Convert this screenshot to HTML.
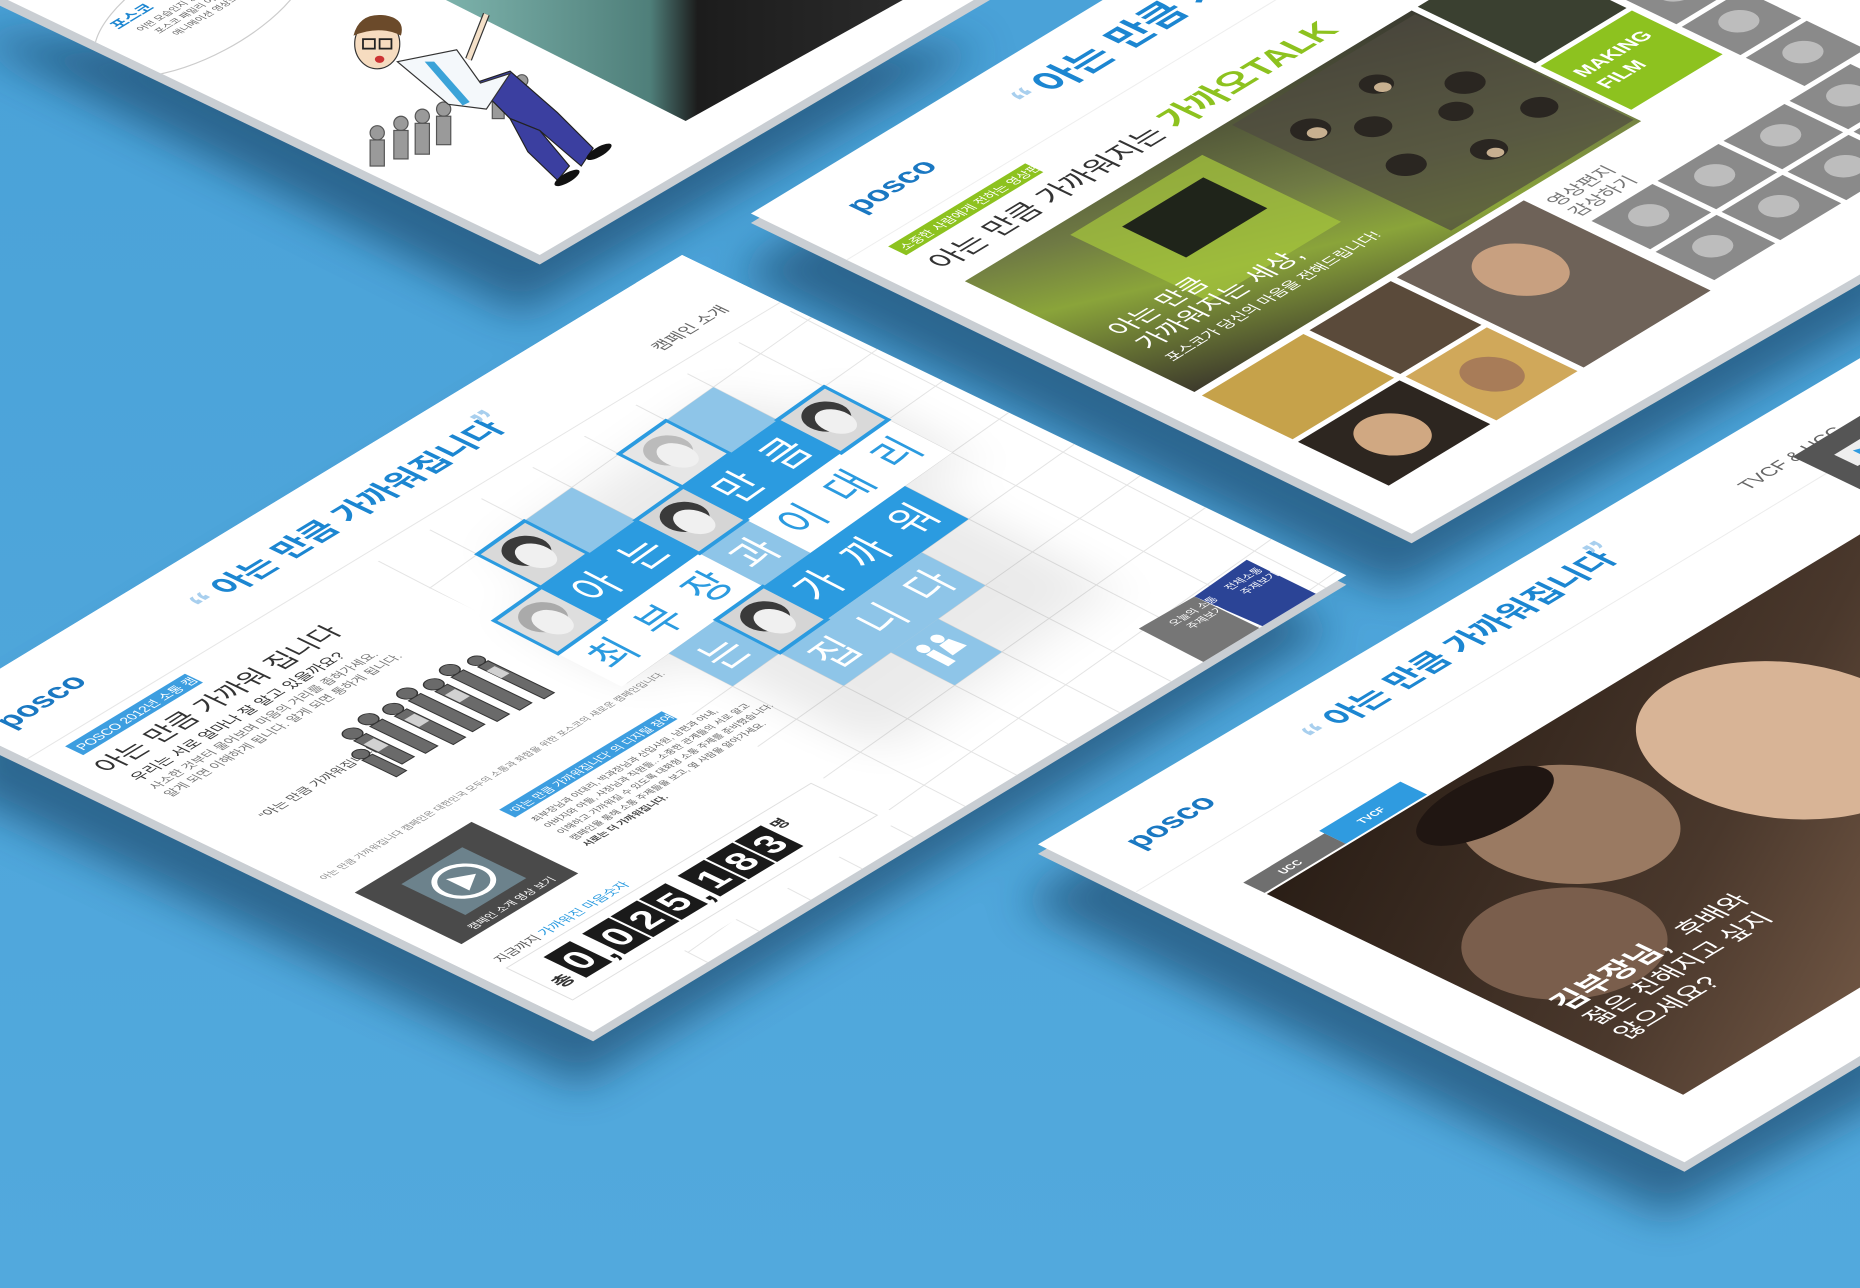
<!DOCTYPE html>
<html><head><meta charset="utf-8">
<style>
html,body{margin:0;padding:0;background:#4ea6da;}
svg{display:block}
text{font-family:"Liberation Sans","Noto Sans CJK KR",sans-serif;}
</style></head>
<body>
<svg width="1860" height="1288" viewBox="0 0 1568 1086" preserveAspectRatio="none" xmlns="http://www.w3.org/2000/svg">
<defs>
  <filter id="bl" x="-20%" y="-20%" width="140%" height="140%"><feGaussianBlur stdDeviation="18"/></filter>
  <filter id="bl2" x="-20%" y="-20%" width="140%" height="140%"><feGaussianBlur stdDeviation="4"/></filter>
  <linearGradient id="bg" x1="0" y1="0" x2="0" y2="1">
    <stop offset="0" stop-color="#4aa2d8"/><stop offset="1" stop-color="#52a9dd"/>
  </linearGradient>
  <linearGradient id="photoA" x1="0" y1="0" x2="1" y2="0">
    <stop offset="0" stop-color="#7fb5ae"/><stop offset="0.45" stop-color="#4f7f7a"/><stop offset="0.55" stop-color="#1c1c1c"/><stop offset="1" stop-color="#2b2b2b"/>
  </linearGradient>
  <linearGradient id="booth" x1="0" y1="1" x2="1" y2="0">
    <stop offset="0" stop-color="#3d3a2c"/><stop offset="0.35" stop-color="#8aa43a"/><stop offset="0.55" stop-color="#6f7a44"/><stop offset="1" stop-color="#3a3a30"/>
  </linearGradient>
  <linearGradient id="vid" x1="0" y1="0" x2="1" y2="1">
    <stop offset="0" stop-color="#2a1e16"/><stop offset="0.4" stop-color="#4a382c"/><stop offset="0.7" stop-color="#7a5e4a"/><stop offset="1" stop-color="#3a2a20"/>
  </linearGradient>
  <clipPath id="clipC"><polygon points="-20,576 575,215 1135,485 500,870 -20,619"/></clipPath>
  <clipPath id="clipB"><polygon points="633,180 951,-13 1600,-13 1600,213 1190,450"/></clipPath>
  <clipPath id="clipD"><polygon points="875,712 1600,283 1600,871 1420,980"/></clipPath>
  <clipPath id="clipA"><polygon points="-10,-8 455,215 843,-13"/></clipPath>
</defs>
<rect x="0" y="0" width="1568" height="1086" fill="url(#bg)"/>

<g filter="url(#bl)" fill="#153c5e" opacity="0.6">
  <polygon points="-30,30 440,265 830,40"/>
  <polygon points="620,230 951,40 1600,40 1600,260 1175,500"/>
  <polygon points="-30,620 565,260 1125,530 490,915 -30,670"/>
  <polygon points="860,760 1600,330 1600,920 1405,1025"/>
</g>

<g fill="#c9ced3">
  <polygon points="-10,0 455,223 843,-5"/>
  <polygon points="633,188 951,-5 1600,-5 1600,221 1190,458"/>
  <polygon points="-20,584 575,223 1135,493 500,878 -20,627"/>
  <polygon points="875,720 1600,291 1600,879 1420,988"/>
</g>

<!-- PANEL A -->
<polygon points="-10,-8 455,215 843,-13" fill="#fff"/>
<g clip-path="url(#clipA)">
  <polygon points="366,-5 770,-5 578,102" fill="url(#photoA)"/>
  <ellipse cx="170" cy="5" rx="100" ry="42" transform="rotate(-28 170 5)" fill="#fff" stroke="#ccc" stroke-width="1"/>
  <g transform="matrix(0.856,-0.519,0.900,0.434,100,25)">
    <text x="0" y="0" font-size="13" font-weight="bold" fill="#1c86d1">포스코</text>
    <text x="8" y="14" font-size="8" fill="#666">어떤 모습인지 궁금하신가요?</text>
    <text x="14" y="25" font-size="8" fill="#666">포스코 패밀리 여러분의 모습</text>
    <text x="20" y="36" font-size="8" fill="#666">애니메이션 영상으로 만나보세요</text>
  </g>
  <g fill="#9a9a9a" stroke="#555" stroke-width="1">
    <circle cx="318" cy="112" r="6"/><rect x="312" y="118" width="12" height="22"/>
    <circle cx="338" cy="104" r="6"/><rect x="332" y="110" width="12" height="24"/>
    <circle cx="356" cy="98" r="6"/><rect x="350" y="104" width="12" height="26"/>
    <circle cx="374" cy="92" r="6"/><rect x="368" y="98" width="12" height="24"/>
    <circle cx="420" cy="75" r="5"/><rect x="415" y="80" width="10" height="20"/>
    <circle cx="440" cy="68" r="5"/><rect x="435" y="73" width="10" height="20"/>
  </g>
  <g>
    <polygon points="400,70 430,60 470,95 500,125 490,140 455,110 430,100" fill="#3b3fa0" stroke="#222" stroke-width="1"/>
    <polygon points="430,100 455,110 480,140 470,152 445,128" fill="#3b3fa0" stroke="#222" stroke-width="1"/>
    <ellipse cx="505" cy="128" rx="12" ry="4" fill="#111" transform="rotate(-30 505 128)"/>
    <ellipse cx="478" cy="150" rx="12" ry="4" fill="#111" transform="rotate(-30 478 150)"/>
    <polygon points="335,52 385,42 405,70 430,62 410,92 378,88" fill="#f4f8fb" stroke="#333" stroke-width="1"/>
    <polygon points="358,52 366,52 396,86 390,89" fill="#3ba3d8"/>
    <line x1="395" y1="50" x2="410" y2="12" stroke="#333" stroke-width="6"/>
    <line x1="395" y1="50" x2="410" y2="12" stroke="#f4e0c8" stroke-width="4"/>
    <ellipse cx="318" cy="37" rx="19" ry="21" fill="#f6dcc0" stroke="#333" stroke-width="1"/>
    <path d="M298,30 Q303,10 325,13 Q342,16 338,30 Q320,21 298,30Z" fill="#6b4a2a"/>
    <rect x="306" y="33" width="10" height="8" fill="none" stroke="#222" stroke-width="1.5"/>
    <rect x="320" y="33" width="10" height="8" fill="none" stroke="#222" stroke-width="1.5"/>
    <ellipse cx="320" cy="50" rx="4" ry="3" fill="#c33"/>
  </g>
</g>

<!-- PANEL B -->
<polygon points="633,180 951,-13 1600,-13 1600,213 1190,450" fill="#fff"/>
<g clip-path="url(#clipB)">
<g transform="matrix(0.856,-0.519,0.900,0.434,633,180)">
  <text x="48" y="58" font-size="26" font-weight="bold" fill="#1a78c2">posco</text>
  <text x="218" y="56" font-size="34" fill="#a8cfee" font-weight="bold">“</text>
  <text x="240" y="56" font-size="34" font-weight="bold" fill="#1c86d1">아는 만큼 가까워집니다</text>
  <text x="560" y="40" font-size="11" fill="#555">포스코홍보센터가 열린 3월 17일, 특별한 공간이 만들어졌습니다</text>
  <text x="560" y="55" font-size="11" fill="#7fae1a">연두빛 가까오TALK 부스의 감격 동영상을 확인하세요</text>
  <rect x="30" y="100" width="135" height="17" fill="#8dc21f"/>
  <text x="34" y="113" font-size="10.5" fill="#fff">소중한 사람에게 전하는 영상편지 이벤트</text>
  <text x="33" y="150" font-size="25" fill="#333">아는 만큼 가까워지는</text>
  <text x="262" y="150" font-size="30" font-weight="bold" fill="#8dc21f">가까오TALK</text>
  <line x1="0" y1="90" x2="1000" y2="90" stroke="#eee"/>
  <rect x="32" y="170" width="440" height="215" fill="url(#booth)"/>
  <rect x="120" y="185" width="130" height="130" fill="#a4c43c" opacity="0.75"/>
  <rect x="150" y="205" width="80" height="60" fill="#1f241a"/>
  <rect x="290" y="175" width="180" height="205" fill="#4e4a40" opacity="0.7"/>
  <g fill="#2a2621"><circle cx="320" cy="220" r="14"/><circle cx="350" cy="250" r="13"/><circle cx="390" cy="215" r="12"/><circle cx="430" cy="260" r="14"/><circle cx="330" cy="300" r="14"/><circle cx="380" cy="330" r="13"/><circle cx="440" cy="320" r="13"/><circle cx="400" cy="280" r="12"/></g>
  <g fill="#c8b090"><circle cx="320" cy="226" r="7"/><circle cx="390" cy="221" r="6"/><circle cx="380" cy="336" r="6"/></g>
  <text x="50" y="300" font-size="22" fill="#fff">아는 만큼</text>
  <text x="50" y="326" font-size="22" fill="#fff">가까워지는 세상,</text>
  <text x="50" y="348" font-size="13" fill="#fff">포스코가 당신의 마음을 전해드립니다!</text>
  <rect x="32" y="392" width="100" height="85" fill="#c6a24a"/>
  <rect x="32" y="482" width="100" height="85" fill="#2d2620"/>
  <rect x="138" y="392" width="80" height="85" fill="#5a4a3a"/>
  <rect x="138" y="482" width="80" height="85" fill="#d0a85a"/>
  <rect x="224" y="392" width="125" height="175" fill="#6e6258"/>
  <ellipse cx="285" cy="450" rx="30" ry="36" fill="#c8a080"/>
  <ellipse cx="80" cy="525" rx="25" ry="28" fill="#d0a882"/>
  <ellipse cx="178" cy="525" rx="20" ry="24" fill="#a87c58"/>
  <text x="358" y="415" font-size="16" fill="#777">영상편지</text>
  <text x="358" y="435" font-size="16" fill="#777">감상하기</text>
  <rect x="478" y="170" width="90" height="110" fill="#3a4030"/>
  <rect x="478" y="285" width="90" height="85" fill="#8dc21f"/>
  <text x="486" y="318" font-size="17" font-weight="bold" fill="#fff">MAKING</text>
  <text x="486" y="340" font-size="17" font-weight="bold" fill="#fff">FILM</text>
  <g fill="#8a8a8a">
    <rect x="360" y="445" width="60" height="55"/><rect x="425" y="445" width="60" height="55"/><rect x="490" y="445" width="60" height="55"/><rect x="555" y="445" width="60" height="55"/>
    <rect x="360" y="505" width="60" height="55"/><rect x="425" y="505" width="60" height="55"/><rect x="490" y="505" width="60" height="55"/><rect x="555" y="505" width="60" height="55"/>
    <rect x="575" y="385" width="60" height="55"/><rect x="575" y="325" width="60" height="55"/><rect x="575" y="265" width="60" height="55"/>
  </g>
  <g fill="#bdbdbd"><circle cx="390" cy="470" r="14"/><circle cx="455" cy="470" r="14"/><circle cx="520" cy="470" r="14"/><circle cx="585" cy="470" r="14"/><circle cx="390" cy="530" r="14"/><circle cx="455" cy="530" r="14"/><circle cx="520" cy="530" r="14"/><circle cx="585" cy="530" r="14"/><circle cx="605" cy="410" r="14"/><circle cx="605" cy="350" r="14"/><circle cx="605" cy="290" r="14"/></g>
</g>
</g>

<!-- PANEL C -->
<polygon points="-20,576 575,215 1135,485 500,870 -20,619" fill="#fff"/>
<g clip-path="url(#clipC)">
  <g transform="matrix(3.98,-2.82,5.38,2.78,416.4,523.4)" stroke="#e4e4e4" fill="none">
    <path vector-effect="non-scaling-stroke" d="M-40,-40 V100 M-30,-40 V100 M-20,-40 V100 M-10,-40 V100 M0,-40 V100 M10,-40 V100 M20,-40 V100 M30,-40 V100 M40,-40 V100 M50,-40 V100 M60,-40 V100 M70,-40 V100 M80,-40 V100 M90,-40 V100 M100,-40 V100 M110,-40 V100"/>
    <path vector-effect="non-scaling-stroke" d="M-40,-40 H120 M-40,-30 H120 M-40,-20 H120 M-40,-10 H120 M-40,0 H120 M-40,10 H120 M-40,20 H120 M-40,30 H120 M-40,40 H120 M-40,50 H120 M-40,60 H120 M-40,70 H120"/>
  </g>
  <g transform="matrix(0.856,-0.519,0.900,0.434,-60,600)">
    <rect x="0" y="-5" width="742" height="110" fill="#fff"/>
    <rect x="0" y="100" width="330" height="500" fill="#fff"/>
    <line x1="0" y1="92" x2="742" y2="92" stroke="#e6e6e6"/>
    <text x="20" y="58" font-size="26" font-weight="bold" fill="#1a78c2">posco</text>
    <text x="212" y="62" font-size="34" font-weight="bold" fill="#a8cfee">“</text>
    <text x="235" y="58" font-size="28" font-weight="bold" fill="#1c86d1">아는 만큼 가까워집니다</text>
    <text x="500" y="52" font-size="34" font-weight="bold" fill="#a8cfee">”</text>
    <text x="645" y="72" font-size="14" fill="#666">캠페인 소개</text>
    <rect x="28" y="101" width="118" height="17" fill="#3d9ee0"/>
    <text x="32" y="114" font-size="11" fill="#fff">POSCO 2012년 소통 캠페인</text>
    <text x="22" y="148" font-size="23" fill="#333">아는 만큼 가까워 집니다</text>
    <text x="28" y="170" font-size="13" fill="#333">우리는 서로 얼마나 잘 알고 있을까요?</text>
    <text x="28" y="186" font-size="10.5" fill="#777">사소한 것부터 물어보며 마음의 거리를 좁혀가세요.</text>
    <text x="28" y="200" font-size="10.5" fill="#777">알게 되면 이해하게 됩니다. 알게 되면 통하게 됩니다.</text>
    <text x="50" y="268" font-size="11" fill="#555">“아는 만큼 가까워집니다.”</text>
    <!-- sketch crowd -->
    <g fill="#6a6a6a" stroke="#333" stroke-width="1">
      <circle cx="165" cy="240" r="7"/><rect x="159" y="247" width="12" height="45"/>
      <circle cx="185" cy="236" r="7"/><rect x="179" y="243" width="12" height="52"/>
      <circle cx="205" cy="240" r="7"/><rect x="199" y="247" width="12" height="55"/>
      <circle cx="225" cy="234" r="7"/><rect x="219" y="241" width="12" height="60"/>
      <circle cx="245" cy="240" r="7"/><rect x="239" y="247" width="12" height="58"/>
      <circle cx="265" cy="236" r="7"/><rect x="259" y="243" width="12" height="64"/>
      <circle cx="285" cy="242" r="6"/><rect x="280" y="248" width="10" height="62"/>
      <circle cx="150" cy="262" r="6"/><rect x="145" y="268" width="10" height="32"/>
    </g>
    <g fill="#ddd" opacity="0.9">
      <rect x="160" y="255" width="10" height="14"/><rect x="200" y="255" width="10" height="14"/><rect x="240" y="255" width="10" height="14"/><rect x="280" y="256" width="8" height="14"/>
    </g>
    <text x="20" y="352" font-size="8" fill="#888">아는 만큼 가까워집니다 캠페인은 대한민국 모두의 소통과 화합을 위한 포스코의 새로운 캠페인입니다.</text>
    <rect x="160" y="382" width="160" height="15" fill="#3d9ee0"/>
    <text x="164" y="394" font-size="9.5" fill="#fff">'아는 만큼 가까워집니다' 의 디지털 참여 캠페인은?</text>
    <text x="165" y="412" font-size="8" fill="#666">최부장님과 이대리, 박과장님과 신입사원, 남편과 아내,</text>
    <text x="165" y="424" font-size="8" fill="#666">아버지와 아들, 사장님과 직원들.. 소중한 관계들의 서로 알고</text>
    <text x="165" y="436" font-size="8" fill="#666">이해하고 가까워질 수 있도록 대화형 소통 주제를 준비했습니다.</text>
    <text x="165" y="448" font-size="8" fill="#666">캠페인을 통해 소통 주제들을 보고, 옆 사람을 알아가세요.</text>
    <text x="165" y="460" font-size="8" font-weight="bold" fill="#444">서로는 더 가까워집니다.</text>
    <rect x="22" y="378" width="115" height="100" fill="#4a4a4a"/>
    <rect x="50" y="395" width="60" height="60" fill="#7a9aa8" opacity="0.7"/>
    <circle cx="80" cy="425" r="20" fill="none" stroke="#fff" stroke-width="4"/>
    <polygon points="74,414 74,436 92,425" fill="#fff"/>
    <text x="40" y="472" font-size="9" fill="#fff">캠페인 소개 영상 보기</text>
    <text x="22" y="515" font-size="11" fill="#555">지금까지 <tspan fill="#2b9be0">가까워진 마음숫자</tspan></text>
    <rect x="20" y="522" width="300" height="62" fill="#fff" stroke="#e0e0e0"/>
    <text x="26" y="568" font-size="16" font-weight="bold" fill="#333">총</text>
    <g fill="#1a1a1a">
      <rect x="46" y="532" width="26" height="40"/><rect x="84" y="532" width="26" height="40"/><rect x="112" y="532" width="26" height="40"/><rect x="140" y="532" width="26" height="40"/><rect x="178" y="532" width="26" height="40"/><rect x="206" y="532" width="26" height="40"/><rect x="234" y="532" width="26" height="40"/>
    </g>
    <g font-size="32" font-weight="bold" fill="#fff">
      <text x="50" y="564">0</text><text x="88" y="564">0</text><text x="116" y="564">2</text><text x="144" y="564">5</text><text x="182" y="564">1</text><text x="210" y="564">8</text><text x="238" y="564">3</text>
    </g>
    <g font-size="30" font-weight="bold" fill="#1a1a1a"><text x="74" y="570">,</text><text x="168" y="570">,</text></g>
    <text x="264" y="545" font-size="13" font-weight="bold" fill="#333">명</text>
  </g>
  <g transform="matrix(3.98,-2.82,5.38,2.78,416.4,523.4)" font-size="6.5" text-anchor="middle">
    <g fill="#000" opacity="0.08" filter="url(#bl2)">
      <rect x="10" y="-10" width="50" height="30" transform="translate(1.5,2)"/>
      <rect x="0" y="0" width="70" height="20" transform="translate(1.5,2)"/>
      <rect x="10" y="20" width="50" height="30" transform="translate(1.5,2)"/>
    </g>
    <rect x="20" y="-10" width="10" height="10" fill="#8ec5e8"/>
    <rect x="50" y="-10" width="10" height="10" fill="#8ec5e8"/>
    <rect x="10" y="0" width="20" height="10" fill="#2b9be0"/>
    <rect x="40" y="0" width="20" height="10" fill="#2b9be0"/>
    <rect x="0" y="10" width="30" height="10" fill="#fff"/>
    <rect x="30" y="10" width="10" height="10" fill="#8ec5e8"/>
    <rect x="40" y="10" width="30" height="10" fill="#fff"/>
    <rect x="10" y="20" width="10" height="10" fill="#8ec5e8"/>
    <rect x="30" y="20" width="30" height="10" fill="#2b9be0"/>
    <rect x="20" y="30" width="30" height="10" fill="#8ec5e8"/>
    <rect x="30" y="40" width="10" height="10" fill="#8ec5e8"/>
    <g stroke="#2b9be0" stroke-width="0.6">
      <rect x="10" y="-10" width="10" height="10" fill="#d9d9d9"/>
      <rect x="40" y="-10" width="10" height="10" fill="#e6e6e6"/>
      <rect x="0" y="0" width="10" height="10" fill="#dedede"/>
      <rect x="30" y="0" width="10" height="10" fill="#d5d5d5"/>
      <rect x="60" y="0" width="10" height="10" fill="#d9d9d9"/>
      <rect x="20" y="20" width="10" height="10" fill="#d5d5d5"/>
    </g>
    <g fill="#3a3a3a">
      <ellipse cx="15" cy="-6" rx="3.4" ry="3"/><ellipse cx="45" cy="-6" rx="3.4" ry="3" fill="#bbb"/><ellipse cx="5" cy="4" rx="3.4" ry="3" fill="#aaa"/><ellipse cx="35" cy="4" rx="3.4" ry="3"/><ellipse cx="65" cy="4" rx="3.4" ry="3"/><ellipse cx="25" cy="24" rx="3.4" ry="3"/>
    </g>
    <g fill="#f0f0f0">
      <ellipse cx="15" cy="-4.5" rx="2.4" ry="2.8"/><ellipse cx="45" cy="-4.5" rx="2.4" ry="2.8"/><ellipse cx="5" cy="5.5" rx="2.4" ry="2.8"/><ellipse cx="35" cy="5.5" rx="2.4" ry="2.8"/><ellipse cx="65" cy="5.5" rx="2.4" ry="2.8"/><ellipse cx="25" cy="25.5" rx="2.4" ry="2.8"/>
    </g>
    <g fill="#fff">
      <text x="15" y="7.3">아</text><text x="25" y="7.3">는</text><text x="45" y="7.3">만</text><text x="55" y="7.3">큼</text>
      <text x="35" y="17.3">과</text>
      <text x="15" y="27.3">는</text><text x="35" y="27.3">가</text><text x="45" y="27.3">까</text><text x="55" y="27.3">워</text>
      <text x="25" y="37.3">집</text><text x="35" y="37.3">니</text><text x="45" y="37.3">다</text>
    </g>
    <g fill="#fff">
      <circle cx="33.5" cy="42.5" r="0.9"/><rect x="32.7" y="43.5" width="1.6" height="3.5"/>
      <circle cx="36.5" cy="42.5" r="0.9"/><polygon points="35.5,43.5 37.5,43.5 38,46 35,46"/>
    </g>
    <g fill="#2b9be0">
      <text x="5" y="17.3">최</text><text x="15" y="17.3">부</text><text x="25" y="17.3">장</text>
      <text x="45" y="17.3">이</text><text x="55" y="17.3">대</text><text x="65" y="17.3">리</text>
    </g>
  </g>
  <polygon points="960,530 1007,503 1067,532 1020,561" fill="#767676"/>
  <polygon points="1007,503 1051,472 1114,503 1069,530" fill="#2b4496"/>
  <text transform="matrix(0.856,-0.519,0.900,0.434,990,528)" font-size="9" fill="#fff">오늘의 소통<tspan x="5" y="12">주제보기</tspan></text>
  <text transform="matrix(0.856,-0.519,0.900,0.434,1037,498)" font-size="9" fill="#fff">전체소통<tspan x="3" y="12">주제보기</tspan></text>
</g>

<!-- PANEL D -->
<polygon points="875,712 1600,283 1600,871 1420,980" fill="#fff"/>
<g clip-path="url(#clipD)">
<g transform="matrix(0.856,-0.519,0.900,0.434,875,712)">
  <text x="40" y="58" font-size="26" font-weight="bold" fill="#1a78c2">posco</text>
  <text x="215" y="62" font-size="34" font-weight="bold" fill="#a8cfee">“</text>
  <text x="238" y="58" font-size="28" font-weight="bold" fill="#1c86d1">아는 만큼 가까워집니다</text>
  <text x="503" y="52" font-size="34" font-weight="bold" fill="#a8cfee">”</text>
  <text x="630" y="66" font-size="16" fill="#666">TVCF &amp; UCC</text>
  <line x1="0" y1="92" x2="900" y2="92" stroke="#ececec"/>
  <rect x="55" y="140" width="80" height="20" fill="#6f6f6f"/>
  <text x="80" y="154" font-size="9" font-weight="bold" fill="#fff">UCC</text>
  <rect x="135" y="135" width="80" height="25" fill="#2f9be0"/>
  <text x="160" y="152" font-size="9" font-weight="bold" fill="#fff">TVCF</text>
  <rect x="55" y="162" width="760" height="390" fill="url(#vid)"/>
  <ellipse cx="250" cy="260" rx="70" ry="80" fill="#9a7a62"/>
  <ellipse cx="140" cy="360" rx="70" ry="70" fill="#7a5e4c"/>
  <ellipse cx="420" cy="300" rx="90" ry="110" fill="#d8b496"/>
  <ellipse cx="230" cy="200" rx="60" ry="30" fill="#201612"/>
  <text x="80" y="420" font-size="26" font-weight="bold" fill="#fff">김부장님,</text>
  <text x="200" y="420" font-size="22" fill="#fff">후배와</text>
  <text x="80" y="448" font-size="22" fill="#fff">젊은 친해지고 싶지</text>
  <text x="80" y="476" font-size="22" fill="#fff">않으세요?</text>
  <rect x="300" y="520" width="120" height="6" fill="#2f9be0"/>
  <rect x="680" y="60" width="120" height="70" fill="#555"/>
  <rect x="700" y="80" width="35" height="22" fill="#eee"/>
  <polygon points="712,86 712,96 724,91" fill="#2f9be0"/>
</g>
</g>
</svg>
</body></html>
